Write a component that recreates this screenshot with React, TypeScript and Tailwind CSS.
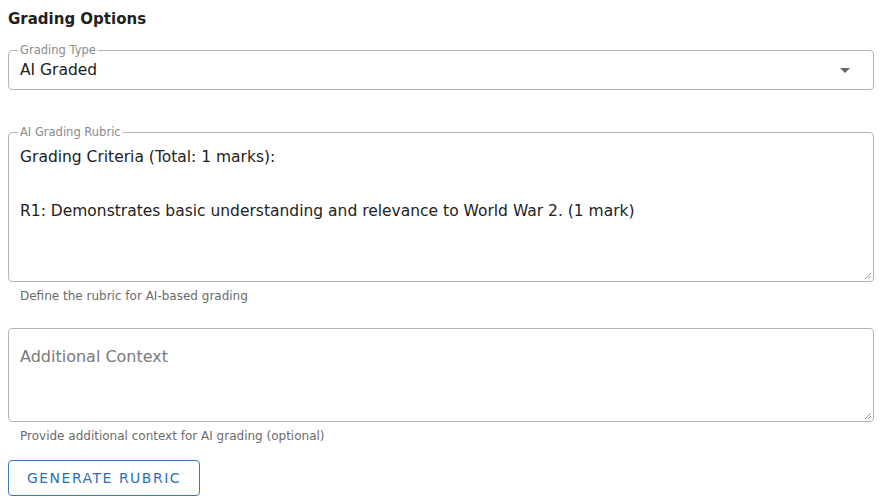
import React from "react";

const font = { fontFamily: '"DejaVu Sans", "Open Sans", sans-serif' };

function Box({
  label,
  children,
  className = "",
}: {
  label?: string;
  children: React.ReactNode;
  className?: string;
}) {
  return (
    <div className={`relative rounded border border-[#b5b5b5] px-[11px] ${className}`}>
      {label && (
        <span className="absolute left-[9px] top-[-8px] bg-white px-[2px] text-[11.5px] leading-[14px] text-[#8a8a8a]">
          {label}
        </span>
      )}
      {children}
    </div>
  );
}

function Grip() {
  return (
    <svg className="absolute bottom-[1px] right-[1px]" width="9" height="9" viewBox="0 0 9 9">
      <path d="M8 2 L2 8 M8 5 L5 8" stroke="#9a9a9a" strokeWidth="1" />
    </svg>
  );
}

export default function App() {
  const [type] = React.useState("AI Graded");

  return (
    <div className="w-[882px] h-[498px] bg-white px-2 pt-[9px] text-[#222]" style={font}>
      <h2 className="text-[15px] font-bold leading-5 text-[#1f1f1f]">Grading Options</h2>

      <Box label="Grading Type" className="mt-[21px] h-[40px] flex items-center justify-between">
        <span className="text-[15.5px] leading-5 text-[#222]">{type}</span>
        <svg width="10" height="5" viewBox="0 0 10 5" className="mr-[12px]">
          <path d="M0 0 L10 0 L5 5 Z" fill="#666" />
        </svg>
      </Box>

      <Box label="AI Grading Rubric" className="mt-[42px] h-[150px] pt-[11px]">
        <div className="text-[15.5px] leading-[27px] text-[#222]">
          <p>Grading Criteria (Total: 1 marks):</p>
          <p>&nbsp;</p>
          <p>R1: Demonstrates basic understanding and relevance to World War 2. (1 mark)</p>
        </div>
        <Grip />
      </Box>
      <p className="mt-[6px] ml-3 text-[12px] leading-4 text-[#6b6b6b]">Define the rubric for AI-based grading</p>

      <Box className="mt-[24px] h-[94px] pt-[16px]">
        <span className="text-[16px] leading-5 text-[#7a7a7a]">Additional Context</span>
        <Grip />
      </Box>
      <p className="mt-[6px] ml-3 text-[12px] leading-4 text-[#6b6b6b]">
        Provide additional context for AI grading (optional)
      </p>

      <button
        type="button"
        className="mt-[16px] h-[36px] w-[192px] rounded border border-[#3a78c0] text-[14px] tracking-[1.5px] text-[#2f6fb5]"
      >
        GENERATE RUBRIC
      </button>
    </div>
  );
}
